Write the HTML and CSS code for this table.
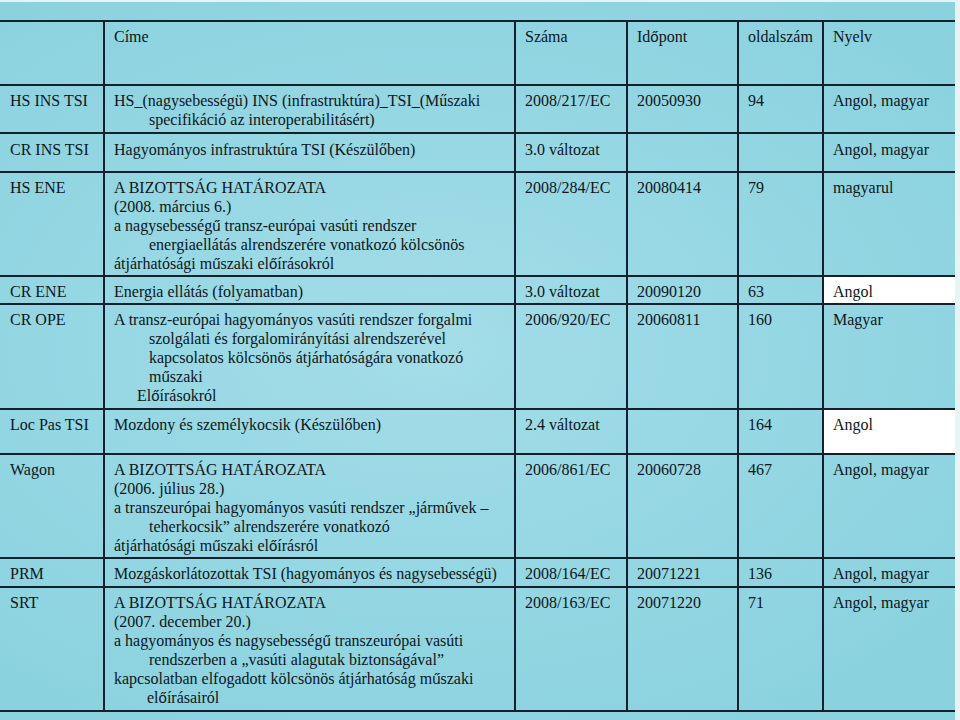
FILE: index.html
```html
<!DOCTYPE html>
<html>
<head>
<meta charset="utf-8">
<title>TSI táblázat</title>
<link rel="stylesheet" href="styles.css">
</head>
<body>
<div class="panel">
<table class="tsi">
<colgroup>
<col class="c1"><col class="c2"><col class="c3"><col class="c4"><col class="c5"><col class="c6">
</colgroup>
<tr class="r-head">
<td></td>
<td>Címe</td>
<td>Száma</td>
<td>Id<span class="s">ő</span>pont</td>
<td>oldalszám</td>
<td>Nyelv</td>
</tr>
<tr class="r-hsins">
<td>HS INS TSI</td>
<td><div>HS_(nagysebességü) INS (infrastruktúra)_TSI_(Műszaki</div><div class="i">specifikáció az interoperabilitásért)</div></td>
<td>2008/217/EC</td>
<td>20050930</td>
<td>94</td>
<td>Angol, magyar</td>
</tr>
<tr class="r-crins">
<td>CR INS TSI</td>
<td>Hagyományos infrastruktúra TSI (Készülőben)</td>
<td>3.0 változat</td>
<td></td>
<td></td>
<td>Angol, magyar</td>
</tr>
<tr class="r-hsene">
<td>HS ENE</td>
<td><div>A BIZOTTSÁG HATÁROZATA</div><div>(2008. március 6.)</div><div>a nagysebesség<span class="s">ű</span> transz-európai vasúti rendszer</div><div class="i">energiaellátás alrendszerére vonatkozó kölcsönös</div><div>átjárhatósági m<span class="s">ű</span>szaki el<span class="s">ő</span>írásokról</div></td>
<td>2008/284/EC</td>
<td>20080414</td>
<td>79</td>
<td>magyarul</td>
</tr>
<tr class="r-crene">
<td>CR ENE</td>
<td>Energia ellátás (folyamatban)</td>
<td>3.0 változat</td>
<td>20090120</td>
<td>63</td>
<td class="w">Angol</td>
</tr>
<tr class="r-crope">
<td>CR OPE</td>
<td><div>A transz-európai hagyományos vasúti rendszer forgalmi</div><div class="i">szolgálati és forgalomirányítási alrendszerével</div><div class="i">kapcsolatos kölcsönös átjárhatóságára vonatkozó</div><div class="i">m<span class="s">ű</span>szaki</div><div class="i2">El<span class="s">ő</span>írásokról</div></td>
<td>2006/920/EC</td>
<td>20060811</td>
<td>160</td>
<td>Magyar</td>
</tr>
<tr class="r-locpas">
<td>Loc Pas TSI</td>
<td>Mozdony és személykocsik (Készülőben)</td>
<td>2.4 változat</td>
<td></td>
<td>164</td>
<td class="w">Angol</td>
</tr>
<tr class="r-wagon">
<td>Wagon</td>
<td><div>A BIZOTTSÁG HATÁROZATA</div><div>(2006. július 28.)</div><div>a transzeurópai hagyományos vasúti rendszer „járm<span class="s">ű</span>vek –</div><div class="i">teherkocsik” alrendszerére vonatkozó</div><div>átjárhatósági m<span class="s">ű</span>szaki el<span class="s">ő</span>írásról</div></td>
<td>2006/861/EC</td>
<td>20060728</td>
<td>467</td>
<td>Angol, magyar</td>
</tr>
<tr class="r-prm">
<td>PRM</td>
<td>Mozgáskorlátozottak TSI (hagyományos és nagysebességü)</td>
<td>2008/164/EC</td>
<td>20071221</td>
<td>136</td>
<td>Angol, magyar</td>
</tr>
<tr class="r-srt">
<td>SRT</td>
<td><div>A BIZOTTSÁG HATÁROZATA</div><div>(2007. december 20.)</div><div>a hagyományos és nagysebesség<span class="s">ű</span> transzeurópai vasúti</div><div class="i">rendszerben a „vasúti alagutak biztonságával”</div><div>kapcsolatban elfogadott kölcsönös átjárhatóság m<span class="s">ű</span>szaki</div><div class="i3">el<span class="s">ő</span>írásairól</div></td>
<td>2008/163/EC</td>
<td>20071220</td>
<td>71</td>
<td>Angol, magyar</td>
</tr>
</table>
</div>
</body>
</html>
```

FILE: styles.css
```css
html, body {
  margin: 0;
  padding: 0;
}
body {
  background: #e6f4f6;
  font-family: "Liberation Serif", "Times New Roman", serif;
  font-size: 16px;
  color: #0e1620;
  width: 960px;
  height: 720px;
  overflow: hidden;
}
.panel {
  width: 955px;
  height: 718px;
  margin-top: 2px;
  padding-top: 18px;
  box-sizing: border-box;
  background: radial-gradient(ellipse 70% 60% at 45% 48%, #a3dde8 0%, #97d8e4 45%, #8bd2df 100%);
}
.tsi {
  border-collapse: collapse;
  table-layout: fixed;
  width: 955px;
  font-family: "Liberation Serif", "Times New Roman", serif;
  font-size: 16px;
}
.c1 { width: 104px; }
.c2 { width: 411px; }
.c3 { width: 112px; }
.c4 { width: 111px; }
.c5 { width: 85px; }
.c6 { width: 132px; }
.tsi td {
  border: 2px solid #14202e;
  vertical-align: top;
  padding: 5px 4px 0 9px;
  line-height: 19px;
  white-space: nowrap;
}
.tsi td:first-child {
  border-left: none;
  padding-left: 10px;
}
.tsi td:last-child {
  border-right: none;
}
.tsi td.w {
  background: #ffffff;
}
.s {
  font-family: "Liberation Sans", Arial, sans-serif;
  font-size: 15px;
}
.i { padding-left: 35px; }
.i2 { padding-left: 23px; }
.i3 { padding-left: 33px; }
.r-head { height: 64px; }
.r-hsins { height: 48px; }
.r-crins { height: 39px; }
.r-crins td { padding-top: 6px; }
.r-hsene { height: 104px; }
.r-crene { height: 28px; }
.r-crope { height: 105px; }
.r-locpas { height: 45px; }
.r-wagon { height: 104px; }
.r-prm { height: 29px; }
.r-srt { height: 124px; }
```
